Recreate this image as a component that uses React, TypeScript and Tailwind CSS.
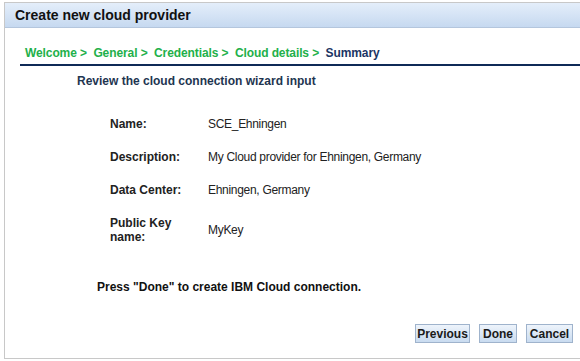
import React from "react";

const font = { fontFamily: '"Liberation Sans", Arial, sans-serif' };

function Row({ label, value }: { label: React.ReactNode; value: string }) {
  return (
    <div className="flex items-center">
      <div className="w-[98px] font-bold text-[12px] leading-[14px] text-[#222]">{label}</div>
      <div className="text-[12px] leading-[14px] text-[#222] tracking-[-0.3px]">{value}</div>
    </div>
  );
}

function Btn({ children, w }: { children: string; w: string }) {
  return (
    <button
      className={`${w} h-[19px] border border-[#9fb3cc] bg-gradient-to-b from-[#eef4fb] to-[#c9dbf0] text-[12px] leading-[16px] font-bold text-[#1a1a1a] flex items-center justify-center`}
      style={font}
    >
      {children}
    </button>
  );
}

export default function App() {
  return (
    <div className="w-[580px] h-[361px] bg-white overflow-hidden" style={font}>
      <div className="ml-[4px] mt-[2px] h-[357px] border-l border-t border-b border-[#c8c8c8] flex flex-col">
        <div className="h-[25px] bg-gradient-to-b from-[#e4eefa] to-[#c6d9f0] border-b border-[#b4c6dd] flex items-center pl-[10px]">
          <span className="font-bold text-[14px] text-[#111]">Create new cloud provider</span>
        </div>
        <div className="pl-[15px] pt-[18px]">
          <div className="font-bold text-[12px] leading-[14px] pl-[5px] whitespace-pre tracking-[-0.1px]">
            <span className="text-[#22b04a]">Welcome {">"}  General {">"}  Credentials {">"}  Cloud details {">"}  </span>
            <span className="text-[#1b3563]">Summary</span>
          </div>
          <div className="mt-[4px] h-[2px] bg-[#0f2a57]" />
          <div className="pl-[57px] mt-[8px] font-bold text-[12px] leading-[14px] text-[#1e3550]">
            Review the cloud connection wizard input
          </div>
          <div className="pl-[90px] mt-[29px] flex flex-col gap-[19px]">
            <Row label="Name:" value="SCE_Ehningen" />
            <Row label="Description:" value="My Cloud provider for Ehningen, Germany" />
            <Row label="Data Center:" value="Ehningen, Germany" />
            <Row label={<>Public Key<br />name:</>} value="MyKey" />
          </div>
          <div className="pl-[77px] mt-[36px] font-bold text-[12px] leading-[14px] text-[#111]">
            Press "Done" to create IBM Cloud connection.
          </div>
        </div>
        <div className="mt-auto mb-[15px] flex justify-end gap-[9px] pr-[7px]">
          <Btn w="w-[55px]">Previous</Btn>
          <Btn w="w-[38px]">Done</Btn>
          <Btn w="w-[47px]">Cancel</Btn>
        </div>
      </div>
    </div>
  );
}
